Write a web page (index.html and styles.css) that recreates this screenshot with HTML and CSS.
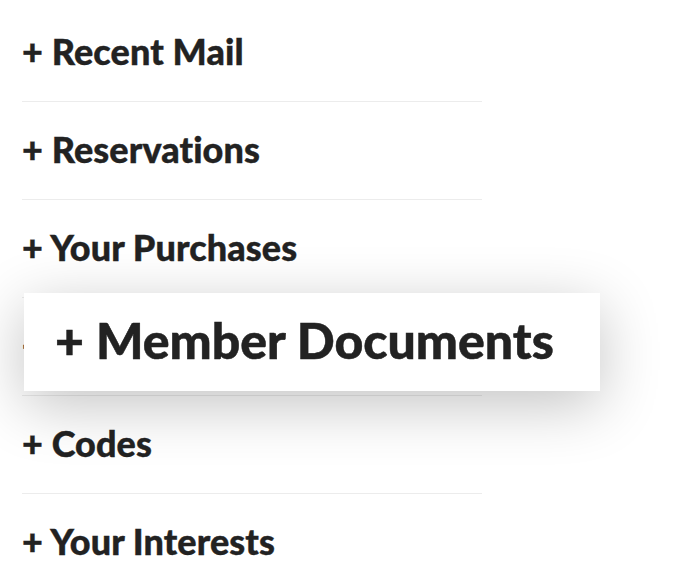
FILE: index.html
```html
<!DOCTYPE html>
<html>
<head>
<meta charset="utf-8">
<link rel="stylesheet" href="styles.css">
</head>
<body>
<ul class="menu">
  <li class="item"><span class="label">+ Recent Mail</span></li>
  <li class="item"><span class="label">+ Reservations</span></li>
  <li class="item"><span class="label">+ Your Purchases</span></li>
  <li class="item item--active">
    <span class="label">+ Member Documents</span>
    <div class="popout"><span class="popout-label">+ Member Documents</span></div>
  </li>
  <li class="item"><span class="label">+ Codes</span></li>
  <li class="item"><span class="label">+ Your Interests</span></li>
</ul>
</body>
</html>
```
FILE: styles.css
```css
html, body {
  margin: 0;
  padding: 0;
  background: #ffffff;
}
body {
  font-family: Lato, "Open Sans", sans-serif;
  color: #222222;
  overflow: hidden;
  font-variant-ligatures: none;
}
.menu {
  list-style: none;
  margin: 0;
  padding: 4px 0 0 22px;
  width: 460px;
}
.item {
  height: 97px;
  border-bottom: 1px solid #ececec;
  display: flex;
  align-items: center;
  position: relative;
}
.label {
  font-size: 36px;
  font-weight: 900;
  line-height: 1;
  padding-bottom: 4px;
  letter-spacing: 0.1px;
  -webkit-text-stroke: 0.4px #222222;
}
.popout {
  position: absolute;
  left: 2px;
  top: -5px;
  width: 576px;
  height: 98px;
  background: #ffffff;
  box-shadow: 0 14px 60px rgba(0, 0, 0, 0.24);
  display: flex;
  align-items: center;
  padding-left: 31px;
  box-sizing: border-box;
  z-index: 2;
}
.popout-label {
  font-size: 50px;
  font-weight: 900;
  line-height: 1;
  padding-bottom: 4px;
  -webkit-text-stroke: 0.5px #222222;
}
```
